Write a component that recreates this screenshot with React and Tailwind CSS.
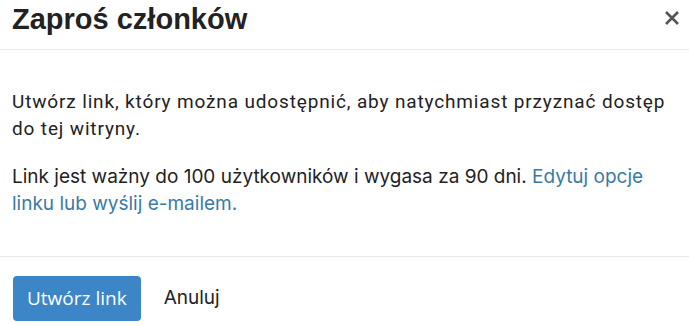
import React from 'react';

const App = () => {
  return (
    <div className="w-[689px] h-[326px] bg-white overflow-hidden [font-family:Inter,sans-serif] text-[#222]">
      {/* HEADER */}
      <div className="flex items-start justify-between h-[50px] pl-[12px] pr-[9px] border-b border-[#e9e9e9]">
        <h1 className="mt-[2px] [font-family:'Liberation_Sans',Arial,sans-serif] font-bold text-[29px] leading-[34px] text-[#222]">
          Zaproś członków
        </h1>
        <button className="mt-[10px] w-[16px] h-[16px] flex items-center justify-center text-[#555]">
          <svg width="16" height="16" viewBox="0 0 16 16">
            <path d="M2 2 L14 14 M14 2 L2 14" stroke="currentColor" strokeWidth="2.6" strokeLinecap="butt" />
          </svg>
        </button>
      </div>

      {/* BODY */}
      <div className="px-[12px] pt-[38px] pb-[39px] border-b border-[#e9e9e9] text-[19px] leading-[27px]">
        <p className="[font-family:Roboto,sans-serif] tracking-[0.85px]">
          Utwórz link, który można udostępnić, aby natychmiast przyznać dostęp do tej witryny.
        </p>
        <p className="mt-[21px]">
          Link jest ważny do 100 użytkowników i wygasa za 90 dni.{' '}
          <a href="#" className="text-[#3a7aa6]">Edytuj opcje linku lub wyślij e-mailem.</a>
        </p>
      </div>

      {/* FOOTER */}
      <div className="flex items-center gap-[23px] px-[13px] pt-[19px]">
        <button className="h-[45px] px-[14px] rounded-[4px] bg-[#3c86c7] text-white text-[19px] [font-family:'Open_Sans',sans-serif]">
          Utwórz link
        </button>
        <button className="text-[19px] text-[#222]">Anuluj</button>
      </div>
    </div>
  );
};

export default App;
